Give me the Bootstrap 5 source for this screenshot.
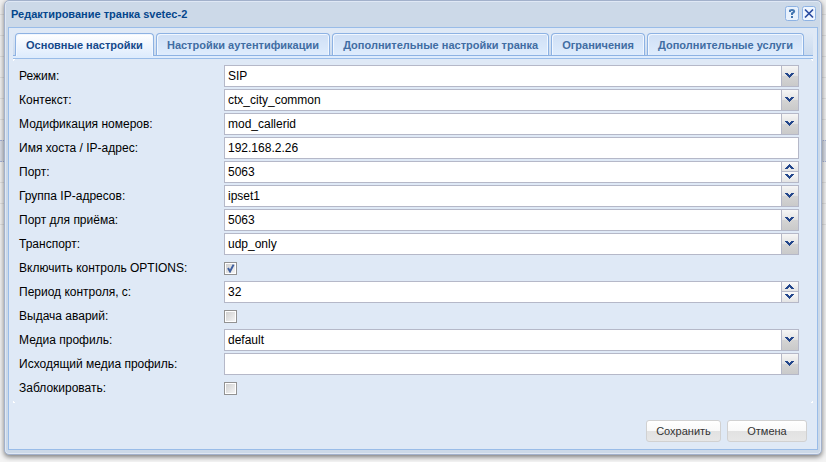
<!DOCTYPE html>
<html lang="ru">
<head>
<meta charset="utf-8">
<meta name="viewport" content="width=device-width, initial-scale=1">
<title>Редактирование транка svetec-2</title>
<link rel="stylesheet" href="https://cdn.jsdelivr.net/npm/bootstrap@5.3.0/dist/css/bootstrap.min.css">
<style>
body{font:12px/16px "Liberation Sans",Arial,sans-serif;color:#000;background:#efefef;min-height:100vh;position:relative}
/* grid rows of the page behind the dialog */
.backdrop-grid{position:absolute;inset:0;z-index:0;overflow:hidden;background:#efefef}
.backdrop-lines{height:225px;background:repeating-linear-gradient(#efefef 0 14px,#dedede 14px 15px,#efefef 15px 21px)}
.backdrop-row{position:absolute;left:0;right:0;top:140px;height:22px;background:#d6dae4;border:dotted #a3afd6;border-width:1px 0}
.backdrop-foot{position:absolute;left:0;right:0;top:430px;bottom:0;background:#f4f4f4}
.dlg{position:relative;z-index:1;margin:0 4px;background:#ccd9e8;border:1px solid #a2b1cb;border-radius:5px;box-shadow:0 2px 5px rgba(0,0,0,.5),inset 0 0 0 1px #dfe8f5;padding:0 3px 4px}
.dlg-title{font-size:11px;line-height:16px;font-weight:700;color:#04468c;margin:0}
.dlg-head{height:26px;padding:5px 2px 0 3px}
.dlg-tools{gap:3px}
.tool{width:14px;height:15px;padding:0;border:0;background:none;display:block}
.tool svg{display:block}
.dlg-body{background:#dfe9f6;border:1px solid #99bce8;padding:4px}
.tabstrip{background:linear-gradient(#dfe9f6,#cbdbef);height:24px;padding:1px 9px 0 2px;gap:2px;border-bottom:1px solid #8db2e3}
.tabstrip .nav-link{flex:1 0 auto;text-align:center;font-size:11px;line-height:14px;font-weight:700;color:#416da3;height:22px;padding:4px 9px 3px;border:1px solid #8db2e3;border-bottom:0;border-radius:4px 4px 0 0;background:linear-gradient(#cfdff5,#deecfd);box-shadow:inset 1px 1px 0 #f1f7ff,inset -1px 0 0 #f1f7ff;white-space:nowrap}
.tabstrip .nav-link.active{color:#15498b;height:23px;background:linear-gradient(#fff,#deecfd)}
.tabline{height:3px;background:#deecfd;border-bottom:1px solid #99bce8}
.fields{padding:6px 14px 4px 6px;gap:2px;background:linear-gradient(135deg,#fff 2px,transparent 2px) 0 0/3px 3px no-repeat,linear-gradient(225deg,#fff 2px,transparent 2px) 100% 0/3px 3px no-repeat,linear-gradient(45deg,#fff 2px,transparent 2px) 0 100%/3px 3px no-repeat,linear-gradient(315deg,#fff 2px,transparent 2px) 100% 100%/3px 3px no-repeat}
.field{height:22px}
.field label{width:205px;flex:none}
.field .box{height:22px;font:inherit;color:#000;border:1px solid #b5b8c8;border-radius:0;background:#fff;padding:0 3px;flex:1 1 0;min-width:0;outline:0}
.field select.box{appearance:none;background:#fff url("data:image/svg+xml,%3Csvg xmlns='http://www.w3.org/2000/svg' width='17' height='20'%3E%3Cdefs%3E%3ClinearGradient id='g' x2='0' y2='1'%3E%3Cstop stop-color='%23f6f6f6'/%3E%3Cstop offset='.5' stop-color='%23e2e2e2'/%3E%3Cstop offset='.5' stop-color='%23d4d4d4'/%3E%3Cstop offset='1' stop-color='%23cacaca'/%3E%3C/linearGradient%3E%3C/defs%3E%3Cpath fill='url(%23g)' d='M1 0h16v20H1z'/%3E%3Cpath fill='%23b5b8c8' d='M0 0h1v20H0z'/%3E%3Cpath fill='%2324478c' d='M4 7h3v1h1v1h1v-1h1v-1h3v1h-1v1h-1v1h-1v1h-1v1h-1v-1h-1v-1h-1v-1h-1v-1h-1z'/%3E%3C/svg%3E") right center no-repeat}
.field .spin{appearance:textfield;border-right:0}
.spin::-webkit-inner-spin-button{display:none}
.spinner{width:18px;border:1px solid #b5b8c8}
.spinner button{flex:none;height:9px;border:0;padding:2px 0 0 3px;background:linear-gradient(#fafafa,#e4e4e4);display:flex;align-items:flex-start}
.spinner button+button{height:11px;border-top:1px solid #b5b8c8}
.spinner svg{flex:none}
.tick{appearance:none;width:13px;height:13px;margin:0;border:1px solid #929292;background:linear-gradient(135deg,#cdcdcd,#f8f8f8);box-shadow:inset 0 0 0 1px #fff}
.tick:checked{background:url("data:image/svg+xml,%3Csvg xmlns='http://www.w3.org/2000/svg' width='11' height='11'%3E%3Cpath fill='none' stroke='%233f5f9f' stroke-width='2' d='M3 5l2 3.4L8.6 1.6'/%3E%3C/svg%3E"),linear-gradient(135deg,#cdcdcd,#f8f8f8)}
.dlg-foot{padding:17px 6px 3px;gap:6px}
.dlg-foot .btn{font-size:11px;line-height:14px;color:#333;min-width:80px;height:22px;padding:0 8px;border:1px solid #d1d1d1;border-radius:3px;background:linear-gradient(#fff,#f9f9f9 48%,#e2e2e2 52%,#e7e7e7)}
.dlg-foot .save{min-width:75px}
</style>
<script src="https://cdn.jsdelivr.net/npm/bootstrap@5.3.0/dist/js/bootstrap.bundle.min.js"></script>
</head>
<body>
<div class="backdrop-grid"><div class="backdrop-lines"></div><div class="backdrop-row"></div><div class="backdrop-foot"></div></div>
<svg class="d-none"><symbol id="up" viewBox="0 0 9 5"><path fill="#24478c" d="M4 0h1v1h1v1h1v1h1v1h1v1H6V4H5V3H4v1H3v1H0V4h1V3h1V2h1V1h1z"/></symbol><symbol id="down" viewBox="0 0 9 5"><path fill="#24478c" d="M0 0h3v1h1v1h1V1h1V0h3v1H8v1H7v1H6v1H5v1H4V4H3V3H2V2H1V1H0z"/></symbol></svg>
<main class="dlg">
<header class="dlg-head d-flex align-items-start">
<h1 class="dlg-title me-auto">Редактирование транка svetec-2</h1>
<div class="d-flex dlg-tools">
<button class="tool" type="button" aria-label="Справка"><svg width="14" height="15"><rect x=".5" y=".5" width="13" height="14" rx="2" fill="#e8f1fc" stroke="#8db2e3"/><path d="M5 6V4.5Q5 4 7 4T9.2 5.2Q9.2 6.4 7 7.4V9M7 10v2" fill="none" stroke="#4275b0" stroke-width="2"/></svg></button>
<button class="tool" type="button" aria-label="Закрыть"><svg width="14" height="15"><rect x=".5" y=".5" width="13" height="14" rx="2" fill="#eff6ff" stroke="#8db2e3"/><path d="M3 3.5l8 8M11 3.5l-8 8" stroke="#2b4ba0" stroke-width="1.7"/></svg></button>
</div>
</header>
<div class="dlg-body">
<nav class="nav flex-nowrap tabstrip">
<a class="nav-link active" href="#main">Основные настройки</a><a class="nav-link" href="#auth">Настройки аутентификации</a><a class="nav-link" href="#extra">Дополнительные настройки транка</a><a class="nav-link" href="#limits">Ограничения</a><a class="nav-link" href="#services">Дополнительные услуги</a>
</nav>
<div class="tabline"></div>
<form>
<div class="fields d-flex flex-column" id="main">
<div class="field d-flex align-items-center"><label for="mode">Режим:</label><select class="box" id="mode"><option>SIP</option></select></div>
<div class="field d-flex align-items-center"><label for="ctx">Контекст:</label><select class="box" id="ctx"><option>ctx_city_common</option></select></div>
<div class="field d-flex align-items-center"><label for="mod">Модификация номеров:</label><select class="box" id="mod"><option>mod_callerid</option></select></div>
<div class="field d-flex align-items-center"><label for="host">Имя хоста / IP-адрес:</label><input class="box" id="host" type="text" value="192.168.2.26"></div>
<div class="field d-flex align-items-center"><label for="port">Порт:</label><input class="box spin" id="port" type="number" value="5063"><div class="spinner d-flex flex-column align-self-stretch"><button type="button" aria-label="Больше"><svg width="9" height="5"><use href="#up"/></svg></button><button type="button" aria-label="Меньше"><svg width="9" height="5"><use href="#down"/></svg></button></div></div>
<div class="field d-flex align-items-center"><label for="ipset">Группа IP-адресов:</label><select class="box" id="ipset"><option>ipset1</option></select></div>
<div class="field d-flex align-items-center"><label for="rport">Порт для приёма:</label><select class="box" id="rport"><option>5063</option></select></div>
<div class="field d-flex align-items-center"><label for="transport">Транспорт:</label><select class="box" id="transport"><option>udp_only</option></select></div>
<div class="field d-flex align-items-center"><label for="opt">Включить контроль OPTIONS:</label><input class="tick" id="opt" type="checkbox" checked></div>
<div class="field d-flex align-items-center"><label for="period">Период контроля, с:</label><input class="box spin" id="period" type="number" value="32"><div class="spinner d-flex flex-column align-self-stretch"><button type="button" aria-label="Больше"><svg width="9" height="5"><use href="#up"/></svg></button><button type="button" aria-label="Меньше"><svg width="9" height="5"><use href="#down"/></svg></button></div></div>
<div class="field d-flex align-items-center"><label for="alarm">Выдача аварий:</label><input class="tick" id="alarm" type="checkbox"></div>
<div class="field d-flex align-items-center"><label for="media">Медиа профиль:</label><select class="box" id="media"><option>default</option></select></div>
<div class="field d-flex align-items-center"><label for="omedia">Исходящий медиа профиль:</label><select class="box" id="omedia"><option></option></select></div>
<div class="field d-flex align-items-center"><label for="block">Заблокировать:</label><input class="tick" id="block" type="checkbox"></div>
</div>
<div class="dlg-foot d-flex justify-content-end"><button class="btn save" type="submit">Сохранить</button><button class="btn" type="button">Отмена</button></div>
</form>
</div>
</main>
</body>
</html>
